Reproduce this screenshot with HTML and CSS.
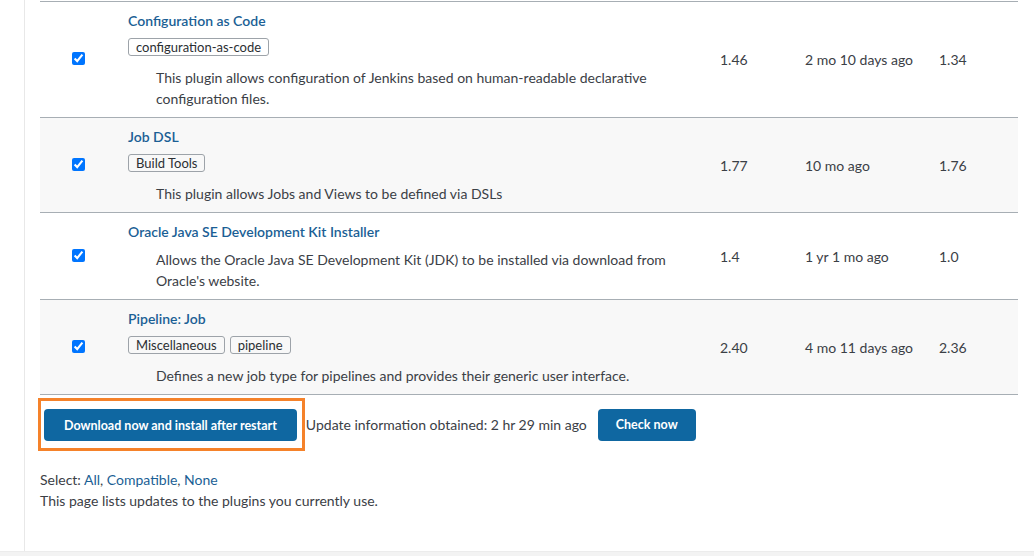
FILE: index.html
```html
<!DOCTYPE html>
<html>
<head>
<meta charset="utf-8">
<link rel="stylesheet" href="styles.css">
</head>
<body>
<div class="page">
  <div class="main">
    <table class="plugins">
      <colgroup>
        <col class="c-sel">
        <col class="c-name">
        <col class="c-ver">
        <col class="c-rel">
        <col class="c-inst">
      </colgroup>
      <tr class="row">
        <td class="sel"><input type="checkbox" checked></td>
        <td class="name">
          <div class="title">Configuration as Code</div>
          <div class="tags"><span class="tag">configuration-as-code</span></div>
          <div class="desc">This plugin allows configuration of Jenkins based on human-readable declarative configuration files.</div>
        </td>
        <td class="num">1.46</td>
        <td class="num">2 mo 10 days ago</td>
        <td class="num">1.34</td>
      </tr>
      <tr class="row alt">
        <td class="sel"><input type="checkbox" checked></td>
        <td class="name">
          <div class="title">Job DSL</div>
          <div class="tags"><span class="tag">Build Tools</span></div>
          <div class="desc">This plugin allows Jobs and Views to be defined via DSLs</div>
        </td>
        <td class="num">1.77</td>
        <td class="num">10 mo ago</td>
        <td class="num">1.76</td>
      </tr>
      <tr class="row">
        <td class="sel"><input type="checkbox" checked></td>
        <td class="name">
          <div class="title">Oracle Java SE Development Kit Installer</div>
          <div class="desc">Allows the Oracle Java SE Development Kit (JDK) to be installed via download from Oracle's website.</div>
        </td>
        <td class="num">1.4</td>
        <td class="num">1 yr 1 mo ago</td>
        <td class="num">1.0</td>
      </tr>
      <tr class="row alt">
        <td class="sel"><input type="checkbox" checked></td>
        <td class="name">
          <div class="title">Pipeline: Job</div>
          <div class="tags"><span class="tag">Miscellaneous</span><span class="tag">pipeline</span></div>
          <div class="desc">Defines a new job type for pipelines and provides their generic user interface.</div>
        </td>
        <td class="num">2.40</td>
        <td class="num">4 mo 11 days ago</td>
        <td class="num">2.36</td>
      </tr>
    </table>
    <div class="actions">
      <span class="highlight"><button class="btn">Download now and install after restart</button></span>
      <span class="info">Update information obtained: 2 hr 29 min ago</span>
      <button class="btn check">Check now</button>
    </div>
    <div class="select">Select: <a href="#">All</a>, <a href="#">Compatible</a>, <a href="#">None</a></div>
    <div class="note">This page lists updates to the plugins you currently use.</div>
  </div>
</div>
<div class="footer"></div>
</body>
</html>
```
FILE: styles.css
```css
html, body {
  margin: 0;
  padding: 0;
  background: #fff;
}
body {
  font-family: Lato, "Open Sans", sans-serif;
  font-size: 14px;
  color: #3b4046;
}
.page {
  margin-left: 24px;
  border-left: 1px solid #e8e8e8;
  height: 551px;
  padding-left: 15px;
  box-sizing: border-box;
  padding-top: 1px;
}
.plugins {
  width: 978px;
  border-collapse: collapse;
  table-layout: fixed;
}
.c-sel { width: 76px; }
.c-name { width: 592px; }
.c-ver { width: 85px; }
.c-rel { width: 134px; }
.c-inst { width: 91px; }
.row td {
  border-top: 1px solid #a7aeb4;
  border-bottom: 1px solid #a7aeb4;
  vertical-align: middle;
  padding: 0;
}
.row.alt td {
  background: #f8f8f8;
}
.sel input {
  display: block;
  margin: -2px auto 0;
  width: 13px;
  height: 13px;
}
.row td.name {
  padding: 9px 12px 8px 12px;
}
.title {
  color: #1b5f95;
  font-weight: 600;
  line-height: 20px;
}
.tags {
  margin-top: 7px;
  margin-bottom: 4px;
  display: flex;
  gap: 5px;
  height: 18px;
}
.tag {
  border: 1px solid #9da3a9;
  border-radius: 3px;
  font-size: 13px;
  line-height: 16px;
  padding: 0 7px;
  color: #2b2f33;
}
.desc {
  padding-top: 7px;
  padding-left: 28px;
  line-height: 21px;
}
.row td.num {
  padding-left: 12px;
}
.actions {
  display: flex;
  align-items: center;
  margin-top: 3px;
  margin-left: -2px;
}
.highlight {
  border: 3px solid #f5822a;
  padding: 8px 5px 7px 3px;
  display: flex;
}
.btn {
  background: #0f67a1;
  color: #fff;
  border: none;
  border-radius: 4px;
  font-family: Lato, "Open Sans", sans-serif;
  font-weight: 700;
  font-size: 12.5px;
  height: 32px;
  padding: 0 20px;
  cursor: pointer;
}
.info {
  margin-left: 1px;
  margin-right: 11px;
}
.check {
  padding: 0 18px;
}
.select {
  margin-top: 18px;
  line-height: 21px;
}
.select a {
  color: #1b5f95;
  text-decoration: none;
}
.note {
  line-height: 21px;
}
.footer {
  height: 5px;
  background: #f3f3f3;
  border-top: 1px solid #ececec;
}
```
